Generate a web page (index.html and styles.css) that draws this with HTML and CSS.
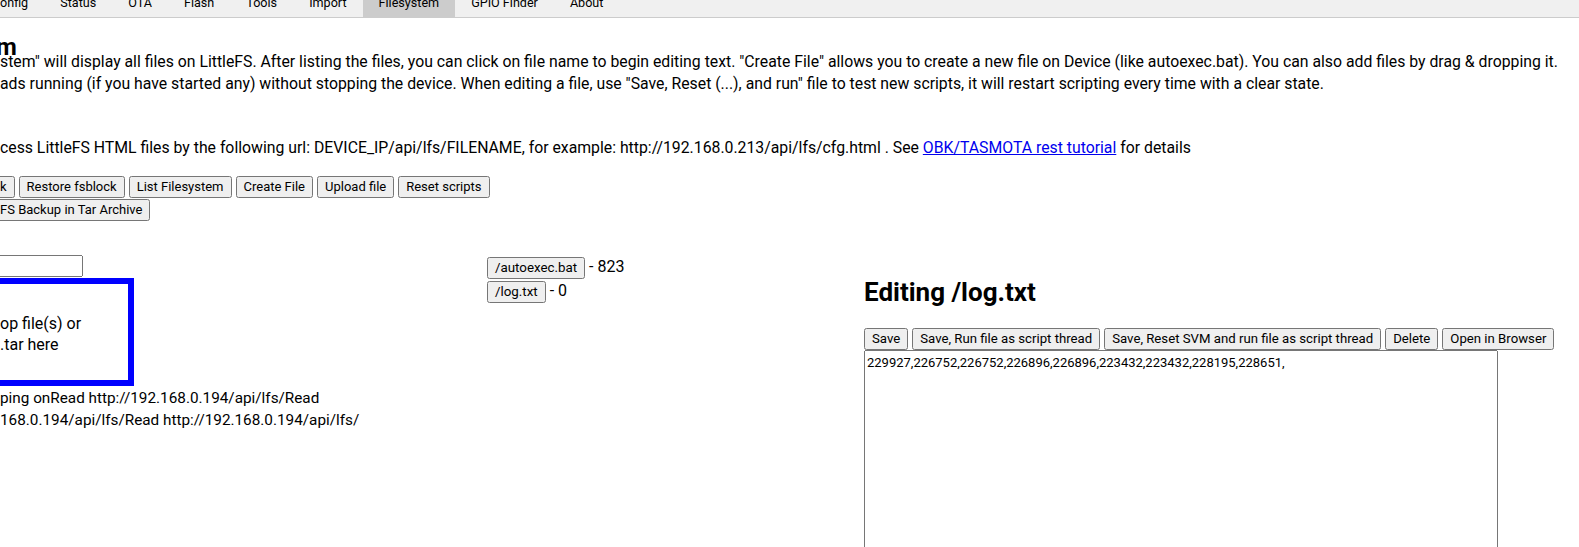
FILE: index.html
```html
<!DOCTYPE html>
<html lang="en">

<head>
    <meta charset="UTF-8">
    <meta name="viewport" content="width=device-width, initial-scale=1.0">
    <title>Filesystem</title>
    <link rel="stylesheet" href="styles.css">
</head>

<body>

    <!-- Top navigation -->
    <nav class="tabs">
        <span class="tab first">onfig</span>
        <span class="tab">Status</span>
        <span class="tab">OTA</span>
        <span class="tab">Flash</span>
        <span class="tab">Tools</span>
        <span class="tab">Import</span>
        <span class="tab active">Filesystem</span>
        <span class="tab">GPIO Finder</span>
        <span class="tab">About</span>
    </nav>

    <div class="page">
        <h2 class="title">m</h2>

        <p class="intro">
            stem" will display all files on LittleFS. After listing the files, you can click on file name to begin editing text. "Create File" allows you to create a new file on Device (like autoexec.bat). You can also add files by drag &amp; dropping it.<br>
            ads running (if you have started any) without stopping the device. When editing a file, use "Save, Reset (...), and run" file to test new scripts, it will restart scripting every time with a clear state.
        </p>

        <p class="intro url">
            cess LittleFS HTML files by the following url: DEVICE_IP/api/lfs/FILENAME, for example: http://192.168.0.213/api/lfs/cfg.html . See <a href="#">OBK/TASMOTA rest tutorial</a> for details
        </p>

        <div class="toolbar">
            <button class="cut">k</button>
            <button>Restore fsblock</button>
            <button>List Filesystem</button>
            <button>Create File</button>
            <button>Upload file</button>
            <button>Reset scripts</button>
        </div>
        <div class="toolbar">
            <button class="cut">FS Backup in Tar Archive</button>
        </div>

        <div class="workspace">
            <!-- upload / drop area -->
            <div class="upload">
                <input type="text" class="filename">
                <div class="dropzone">op file(s) or<br>.tar here</div>
                <div class="log">
                    ping onRead http://192.168.0.194/api/lfs/Read<br>
                    168.0.194/api/lfs/Read http://192.168.0.194/api/lfs/
                </div>
            </div>

            <!-- file list -->
            <div class="files">
                <div class="file-row"><button>/autoexec.bat</button> - 823</div>
                <div class="file-row"><button>/log.txt</button> - 0</div>
            </div>

            <!-- editor -->
            <div class="editor">
                <h2>Editing /log.txt</h2>
                <div class="editor-buttons">
                    <button>Save</button>
                    <button>Save, Run file as script thread</button>
                    <button>Save, Reset SVM and run file as script thread</button>
                    <button>Delete</button>
                    <button>Open in Browser</button>
                </div>
                <textarea class="content">229927,226752,226752,226896,226896,223432,223432,228195,228651,</textarea>
            </div>
        </div>
    </div>

</body>

</html>
```

FILE: styles.css
```css
body {
    font-family: "Segoe UI", Roboto, sans-serif;
    font-size: 16px;
    color: #000;
    background-color: #fff;
    margin: 0;
    overflow: hidden;
}

button {
    font-family: "Segoe UI", Roboto, sans-serif;
    font-size: 13.333px;
    line-height: 16px;
}

/* tabs */
.tabs {
    display: flex;
    height: 17px;
    background-color: #f0f0f0;
    border-bottom: 1px solid #ccc;
    overflow: hidden;
}

.tab {
    padding: 0 16px;
    margin-top: -4px;
    font-size: 12.6px;
    line-height: 14px;
    height: 21px;
    white-space: nowrap;
}

.tab.first {
    padding-left: 0;
}

.tab.active {
    background-color: #ccc;
}

/* page */
.title {
    font-size: 24px;
    line-height: 22px;
    margin: 18px 0 -7px -4px;
}

.intro {
    margin: 0;
    font-size: 15.8px;
    line-height: 22px;
    white-space: nowrap;
}

.url {
    margin-top: 42px;
}

a {
    color: #0000ee;
}

.toolbar {
    display: flex;
    gap: 4px;
    margin-top: 17px;
}

.toolbar button {
    font-size: 13px;
}

.toolbar + .toolbar {
    margin-top: 1px;
}

.cut {
    margin-left: -8px;
}

.workspace {
    display: flex;
    margin-top: 33px;
}

.upload {
    width: 487px;
    flex-shrink: 0;
}

.filename {
    display: block;
    width: 191px;
    height: 22px;
    box-sizing: border-box;
    margin: 1px 0 1px -108px;
}

.dropzone {
    width: 234px;
    box-sizing: border-box;
    margin-left: -100px;
    border: 6px solid #0000ff;
    padding: 29px 0 25px 94px;
    line-height: 21px;
}

.log {
    margin-top: 1px;
    font-size: 15.3px;
    line-height: 22px;
    white-space: nowrap;
}

.files {
    width: 377px;
    flex-shrink: 0;
    padding-top: 1px;
}

.file-row {
    line-height: 23px;
}

.editor {
    flex: 1;
}

.editor h2 {
    font-size: 26px;
    margin: 23px 0 21px;
}

.editor-buttons {
    display: flex;
    gap: 4px;
}

.editor-buttons button {
    font-size: 13.2px;
}

.content {
    display: block;
    width: 634px;
    height: 260px;
    box-sizing: border-box;
    margin: 0;
    padding: 4px 2px;
    font-family: "Segoe UI", Roboto, sans-serif;
    font-size: 13px;
    resize: none;
}
```
